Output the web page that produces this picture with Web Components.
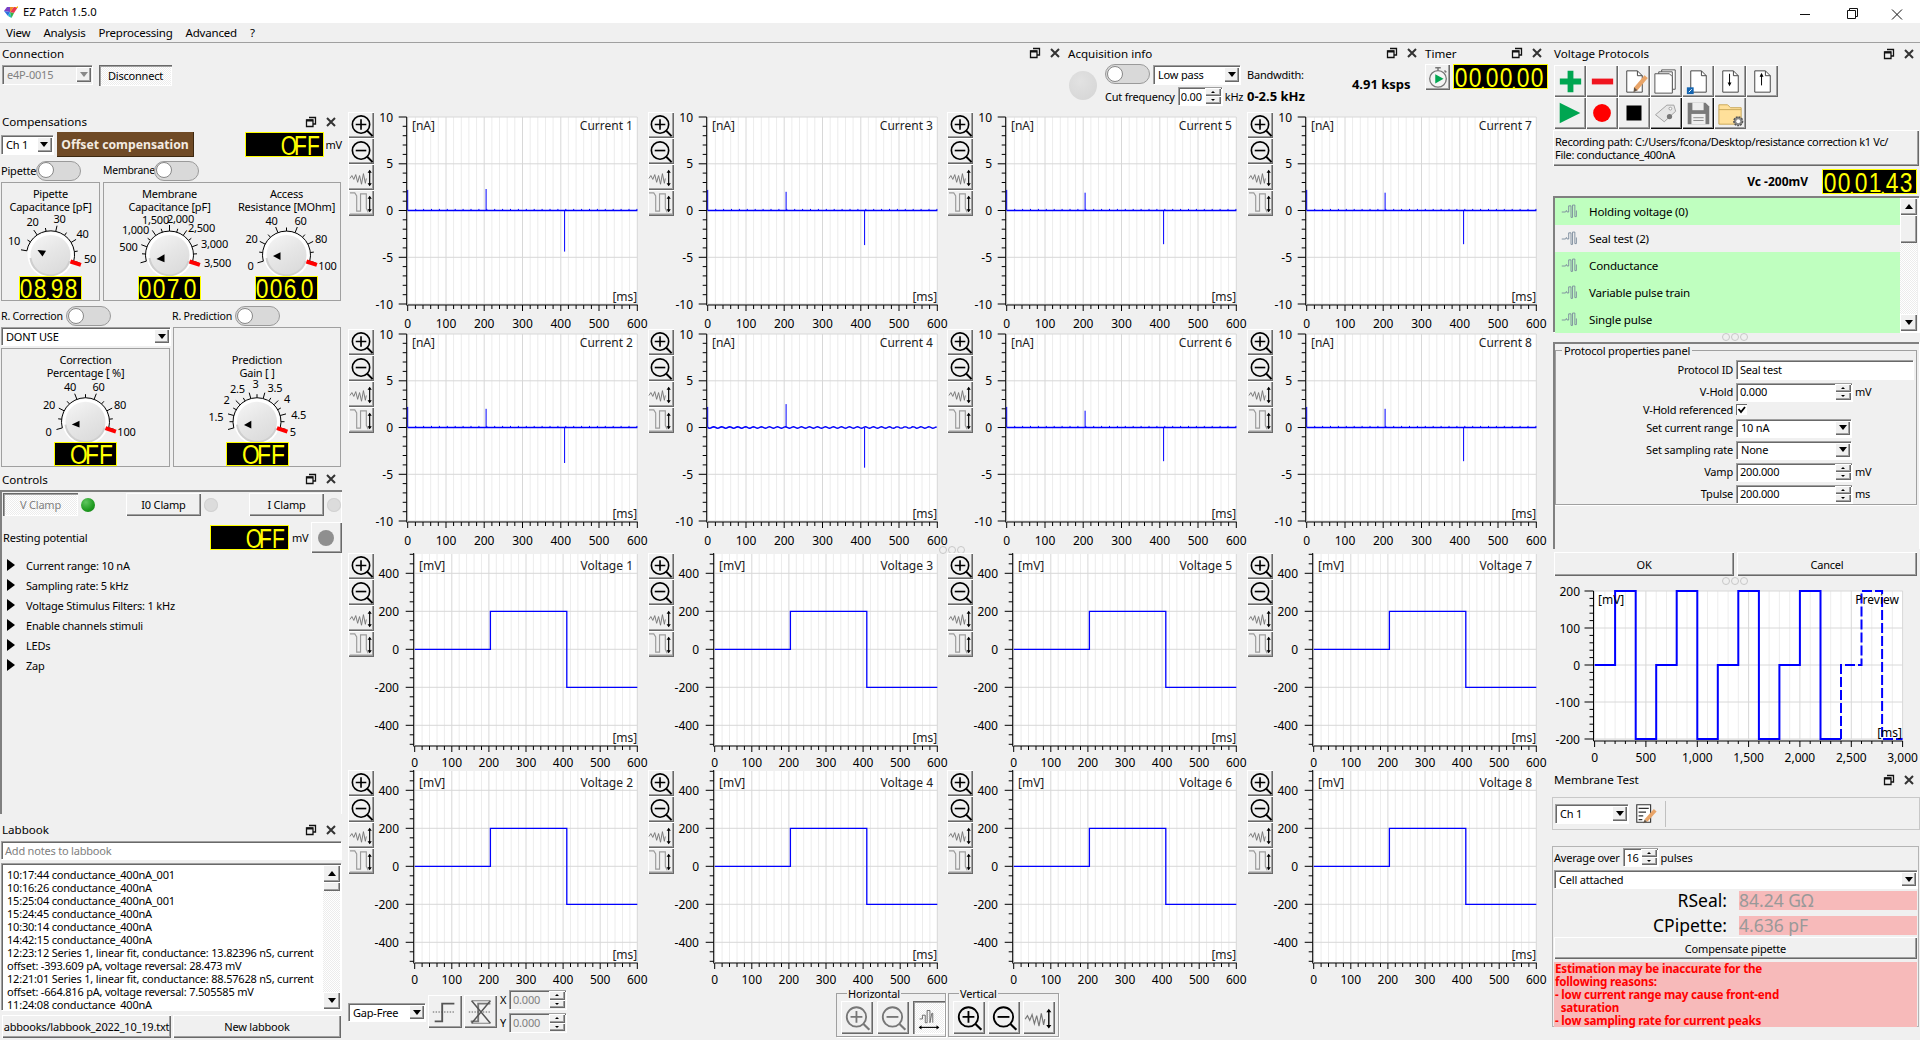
<!DOCTYPE html>
<html><head><meta charset="utf-8"><title>EZ Patch</title>
<style>
html,body{margin:0;padding:0;width:1920px;height:1040px;overflow:hidden;background:#f0f0f0;color:#000;font:11px/13px "Noto Sans","Liberation Sans",sans-serif;letter-spacing:-.2px}
ez-app{display:block}
</style></head><body><ez-app></ez-app>
<script>
const RAISED='background:#f0f0f0;box-shadow:inset 1px 1px 0 #fff,inset -1px -1px 0 #696969,inset -2px -2px 0 #a0a0a0;';
const SUNKEN='background:#fff;box-shadow:inset 1px 1px 0 #a0a0a0,inset 2px 2px 0 #696969,1px 1px 0 #fff;';
const DITHER='background:repeating-conic-gradient(#fff 0 25%,#ececec 0 50%) 0 0/2px 2px;';
function def(name,css,render){
  customElements.define(name,class extends HTMLElement{
    connectedCallback(){
      if(this.shadowRoot)return;
      const s=this.attachShadow({mode:'open'});
      s.innerHTML='<style>'+css+'</style>'+render(this);
    }
  });
}
const A=(e,n,d='')=>e.hasAttribute(n)?e.getAttribute(n):d;

/* ---- icons ---- */
const page=(ex='')=>`<path d="M8 5h11l5 5v17H8z" fill="#fff" stroke="#444"/><path d="M19 5v5h5" fill="none" stroke="#444"/>${ex}`;
const mag=(k,c='#000')=>`<circle cx="12.5" cy="12" r="9" fill="none" stroke="${c}" stroke-width="1.7"/><path d="M7 12h11${k=='+'?'M12.5 6.5v11':''}" stroke="${c}" stroke-width="1.7" fill="none"/><path d="M19 18.5 24.5 24" stroke="${c}" stroke-width="2"/>`;
const varrow=(x,y0,y1)=>`<path d="M${x} ${y0+1}V${y1-1}" stroke="#000" stroke-width="1.2"/><path d="M${x-2.2} ${y0+3}L${x} ${y0}L${x+2.2} ${y0+3}zM${x-2.2} ${y1-3}L${x} ${y1}L${x+2.2} ${y1-3}z" fill="#000"/>`;
const harrow=(y,x0,x1)=>`<path d="M${x0+1} ${y}H${x1-1}" stroke="#000" stroke-width="1.2"/><path d="M${x0+3} ${y-2.2}L${x0} ${y}L${x0+3} ${y+2.2}zM${x1-3} ${y-2.2}L${x1} ${y}L${x1-3} ${y+2.2}z" fill="#000"/>`;
const ICONS={
 zoomin:[26,mag('+')],zoomout:[26,mag('-')],
 zoomin_g:[26,mag('+','#777')],zoomout_g:[26,mag('-','#777')],
 wave:[26,`<path d="M1 14l2-3 2 4 2-5 2 8 2-7 2 9 2-11 2 10 1-5" fill="none" stroke="#777" stroke-width="1"/>`+varrow(21.5,5,22)],
 pulse:[26,`<path d="M1 2h5l2 3v16h4V3h6v15l2 4M1 24h24" fill="none" stroke="#9a9a9a" stroke-width="1.2"/>`+varrow(21.5,5,22)],
 fit_h:[32,`<path d="M6 17h3v-4h3v8h2V8h3v13l2-10h1v10" fill="none" stroke="#666" stroke-width="1"/>`+harrow(26,5,27)],
 stepa:[32,`<path d="M5 26h8V7h13" fill="none" stroke="#555" stroke-width="2"/><path d="M3 16h24" stroke="#555" stroke-dasharray="1.5 1.5"/>`],
 stepb:[32,`<path d="M5 26h8V7h13" fill="none" stroke="#777" stroke-width="2"/><path d="M3 16h24" stroke="#555" stroke-dasharray="1.5 1.5"/><path d="M6 4l20 24M26 4 6 28" stroke="#555" stroke-width="1.6"/><path d="M6 4h20M6 28h20" stroke="#777"/>`],
 plus:[32,`<path d="M13 5h6v8h8v6h-8v8h-6v-8H5v-6h8z" fill="#00a651"/>`],
 minus:[32,`<rect x="5" y="13" width="22" height="6" fill="#f0141e"/>`],
 edit:[32,page()+`<path d="M28 11 17 24" stroke="#e8a468" stroke-width="4.5"/><path d="M15 27l.5-5 3.6 3z" fill="#654"/>`],
 copy:[32,`<path d="M11 4h14v20H11z" fill="#fff" stroke="#555"/><path d="M8 6h14v20H8z" fill="#fff" stroke="#555"/><path d="M4 8h15l3 3v17H4z" fill="#fff" stroke="#555"/>`],
 import:[32,page()+`<rect x="4" y="22" width="7" height="7" fill="#1565b0"/><path d="M6 27l3-3" stroke="#fff"/>`],
 down:[32,page(`<path d="M15 8v11" stroke="#000"/><path d="M13 17h4l-2 4z" fill="#000"/>`)],
 up:[32,page(`<path d="M15 9v11" stroke="#000"/><path d="M13 11h4l-2-4z" fill="#000"/>`)],
 play:[32,`<path d="M5 5l22 11L5 27z" fill="#00a651"/>`],
 rec:[32,`<circle cx="16" cy="16" r="9.5" fill="#ff0000"/>`],
 stop:[32,`<rect x="8" y="8" width="16" height="16" fill="#000"/>`],
 tag:[32,`<path d="M4 18 17 7h8l2 7-13 12z" fill="#e6e6e6" stroke="#999"/><circle cx="21" cy="11" r="1.6" fill="#fff" stroke="#999"/><circle cx="20" cy="20" r="3" fill="#777"/>`],
 save:[32,`<path d="M5 5h19l4 4v19H5z" fill="#7a7a7a"/><rect x="10" y="5" width="12" height="8" fill="#eee"/><rect x="9" y="17" width="15" height="11" fill="#eee"/><path d="M11 21h11M11 24h11" stroke="#888"/>`],
 folder:[32,`<path d="M4 7h9l3 3h11v17H4z" fill="#ffe09a" stroke="#c9a85a"/><path d="M4 12h23" stroke="#c9a85a"/><circle cx="24" cy="24" r="4.5" fill="#888" stroke="#555" stroke-width="1.5" stroke-dasharray="2 1"/><circle cx="24" cy="24" r="2" fill="#fff"/>`],
 timer:[26,`<circle cx="13" cy="15" r="9" fill="#f4f4f4" stroke="#777" stroke-width="1.4"/><path d="M10 3h6M13 3v3M20 6l2 2" stroke="#777" stroke-width="1.6"/><path d="M10 10l9 5-9 5z" fill="#00a651"/>`],
 notes:[26,`<path d="M3 3h15v19H3z" fill="#fff" stroke="#333" stroke-width="1.2"/><path d="M5 7h11M5 11h8M5 15h5M5 19h4" stroke="#333" stroke-width="1.3"/><path d="M23 9 13 20" stroke="#e8a468" stroke-width="4"/><path d="M10 23l1.5-4 2.5 2.2z" fill="#654"/>`],
 list:[26,`<path d="M1 13h5l1-2 1 2h2V5h3v15h2V4h3v15h2v-8" fill="none" stroke="#7c8c9c" stroke-width="1.2"/>`]
};
const icon=(n,s)=>{const[v,b]=ICONS[n];return `<svg width="${s}" height="${s}" viewBox="0 0 ${v} ${v}" style="display:block">${b}</svg>`};
def('ez-icon',':host{display:inline-block;line-height:0}',e=>icon(A(e,'name'),+A(e,'size',16)));

/* ---- basic widgets ---- */
def('ez-btn',`:host{display:inline-flex;align-items:center;justify-content:center;box-sizing:border-box;white-space:nowrap;overflow:hidden;${RAISED}}
:host([pressed]){${DITHER}box-shadow:inset 1px 1px 0 #696969,inset 2px 2px 0 #a0a0a0,inset -1px -1px 0 #fff;}
:host([dim]){color:#808080}`,e=>'<slot></slot>');
def('ez-tool',`:host{display:inline-flex;align-items:center;justify-content:center;box-sizing:border-box;${RAISED}}
:host([dark]){box-shadow:inset 1px 1px 0 #fff,inset -1px -1px 0 #111,inset -2px -2px 0 #888}
:host([pressed]){${DITHER}box-shadow:inset 1px 1px 0 #696969,inset 2px 2px 0 #a0a0a0,inset -1px -1px 0 #fff}`,
 e=>icon(A(e,'name'),+A(e,'size',26)));
def('ez-combo',`:host{display:flex;align-items:center;box-sizing:border-box;padding-left:5px;${SUNKEN}white-space:nowrap}
:host([disabled]){background:#f0f0f0;color:#808080}
.t{flex:1;overflow:hidden}
.a{width:15px;height:calc(100% - 4px);margin-right:1px;display:flex;align-items:center;justify-content:center;box-sizing:border-box;${RAISED}}
.a i{border:4px solid transparent;border-top:5px solid #000;border-bottom:0}
:host([disabled]) .a i{border-top-color:#888}`,e=>`<span class="t"><slot></slot></span><span class="a"><i></i></span>`);
def('ez-spin',`:host{display:flex;align-items:center;box-sizing:border-box;padding-left:4px;${SUNKEN}white-space:nowrap}
:host([disabled]){background:#f0f0f0;color:#808080}
.t{flex:1;overflow:hidden}
.c{display:flex;flex-direction:column;width:17px;height:100%;padding:1px 1px 1px 0;box-sizing:border-box}
.c span{flex:1;display:flex;align-items:center;justify-content:center;${RAISED}}
.u{border:2px solid transparent;border-bottom:2px solid #000;border-top:0}
.d{border:2px solid transparent;border-top:2px solid #000;border-bottom:0}`,
 e=>`<span class="t"><slot></slot></span><span class="c"><span><i class="u"></i></span><span><i class="d"></i></span></span>`);
def('ez-toggle',`:host{display:inline-block;width:45px;height:20px;box-sizing:border-box;border:1.5px solid #9a9a9a;border-radius:10px;background:#d9d9d9;flex:none}
i{display:block;width:14px;height:14px;margin:.5px 0 0 1px;border-radius:50%;background:#fff;border:1px solid #888}`,e=>'<i></i>');
def('ez-led',`:host{display:inline-block;width:14px;height:14px;border-radius:50%;background:#dcdcdc;flex:none;box-shadow:inset 0 0 0 1px #d2d2d2}
:host([on]){background:radial-gradient(circle at 35% 30%,#5fc65f,#1f9a20 60%,#127a14);box-shadow:none}`,e=>'');
def('ez-lcd',`:host{display:flex;align-items:center;justify-content:flex-end;box-sizing:border-box;background:#000;border:1px solid #ffff00;color:#ffff00;flex:none;padding-right:3px;white-space:nowrap;letter-spacing:0}
b,i{display:inline-block;font:400 20px/14px "Liberation Sans",sans-serif;height:14px;text-align:center;flex:none}
i{width:3px;font-style:normal;text-indent:-2px;transform:translateY(5px)}`,e=>{
 const w=+A(e,'w',13),sy=+A(e,'sy',1.36),sx=(w/11.1*.9).toFixed(2);
 return [...A(e,'text')].map(c=>c=='.'?`<i>.</i>`:`<b style="width:${w}px;transform:scale(${sx},${sy})">${c}</b>`).join('');
});
def('dock-title',`:host{display:flex;align-items:center;justify-content:space-between;box-sizing:border-box;font-size:11.6px;letter-spacing:0;padding-bottom:1px}
.ic{display:flex;gap:8px;align-items:center;margin-left:auto}
svg{display:block}`,e=>`<span>${A(e,'text')}</span>`+(e.hasAttribute('noicons')?'':`<span class="ic">
<svg width="12" height="12" viewBox="0 0 12 12"><path d="M4 1.5h6.5V8H8M1.5 4H8v6.5H1.5z" fill="none" stroke="#111" stroke-width="1.3"/><path d="M1.5 4.5H8" stroke="#111" stroke-width="2"/></svg>
<svg width="12" height="12" viewBox="0 0 12 12"><path d="M2 2l8 8M10 2l-8 8" stroke="#333" stroke-width="2"/></svg></span>`));
def('ez-dots',`:host{display:flex;justify-content:center;align-items:center;gap:1px}i{width:6px;height:6px;border:1px solid #c8c8c8;border-radius:50%}`,e=>'<i></i><i></i><i></i>');
def('ez-scroll',`:host{display:flex;flex-direction:column;width:17px;box-sizing:border-box;${DITHER}flex:none}
.b{height:17px;display:flex;align-items:center;justify-content:center;flex:none;${RAISED}}
.u{border:4px solid transparent;border-bottom:5px solid #000;border-top:0}
.d{border:4px solid transparent;border-top:5px solid #000;border-bottom:0}
.th{flex:none;${RAISED}}.s{flex:1}`,e=>`<div class="b"><i class="u"></i></div><div class="th" style="height:${A(e,'thumb',17)}px"></div><div class="s"></div><div class="b"><i class="d"></i></div>`);

/* ---- knob ---- */
def('ez-dial',`:host{display:block;line-height:0}svg{display:block;overflow:visible}text{font-size:11px}`,e=>{
 const w=+A(e,'w'),h=62,cx=w/2,cy=+A(e,'cy',41);
 const labels=A(e,'labels').split(';').map(s=>{const p=s.split('|');return{t:p[0],x:+p[1],y:+p[2]}});
 const st=+A(e,'start',195),en=+A(e,'end',-15),n=+A(e,'n',10),mj=+A(e,'mj',2);
 const rad=a=>a*Math.PI/180;const P=(r,a)=>[(cx+r*Math.cos(rad(a))).toFixed(1),(cy-r*Math.sin(rad(a))).toFixed(1)];
 let tk='';
 for(let i=0;i<=n;i++){const a=st+(en-st)*i/n,[x0,y0]=P(24,a),[x1,y1]=P(i%mj==0?30:27.5,a);tk+=`M${x0} ${y0}L${x1} ${y1}`;}
 const[ax,ay]=P(24,st),[bx,by]=P(24,en);
 const[r0x,r0y]=P(21,-18),[r1x,r1y]=P(32,-18);
 const id='g'+Math.random().toString(36).slice(2,8);
 return `<svg width="${w}" height="${h}" viewBox="0 0 ${w} ${h}">
 <defs><linearGradient id="${id}" x1="0" y1="0" x2=".6" y2="1"><stop offset="0" stop-color="#f6f6f6"/><stop offset=".55" stop-color="#e6e6e6"/><stop offset="1" stop-color="#dcdcdc"/></linearGradient></defs>
 <path d="M${ax} ${ay}A24 24 0 1 1 ${bx} ${by}" fill="none" stroke="#000" stroke-width="1"/>
 <path d="${tk}" stroke="#000" stroke-width="1" fill="none"/>
 <circle cx="${cx}" cy="${cy}" r="23" fill="#fff"/><circle cx="${cx}" cy="${cy}" r="20" fill="url(#${id})"/>
 <path d="M${cx-20} ${cy+3}A20 20 0 0 0 ${cx+19} ${cy+6}" fill="none" stroke="#cfcfcf" stroke-width="2"/>
 <path d="M${r0x} ${r0y}L${r1x} ${r1y}" stroke="#ff0000" stroke-width="4"/>
 <polygon points="${A(e,'ptr').split(' ').map(p=>{const[a,b]=p.split(',');return (cx+ +a)+','+(cy+ +b)}).join(' ')}" fill="#000"/>
 ${labels.map(l=>`<text x="${cx+l.x}" y="${cy+l.y+4}" text-anchor="middle">${l.t}</text>`).join('')}
 </svg>`;
});
def('ez-knob',`:host{display:flex;flex-direction:column;align-items:center;text-align:center}
.t{height:27px;white-space:nowrap}`,e=>`<div class="t">${A(e,'title1')}<br>${A(e,'title2')}</div>
<ez-dial w="${A(e,'w')}" cy="${A(e,'cy',41)}" labels="${A(e,'labels')}" start="${A(e,'start',195)}" end="${A(e,'end',-15)}" n="${A(e,'n',10)}" mj="${A(e,'mj',2)}" ptr="${A(e,'ptr')}"></ez-dial>
<ez-lcd text="${A(e,'value')}" w="14" style="width:63px;height:24px"></ez-lcd>`);

/* ---- plots ---- */
const fmt=n=>Math.abs(n)>=1000?String(n).replace(/(\d)(\d{3})$/,'$1,$2'):String(n);
function tracePlot(e){
 const isC=A(e,'type')=='current';
 const L=isC?33.7:40.7,R=263.3,T=isC?5:1,B=192;
 const X=t=>+(L+t*(R-L)/600).toFixed(1);
 const Y=isC?(v=>+(T+(10-v)*(B-T)/20).toFixed(1)):(v=>+(96.3-v*.19).toFixed(1));
 const ax=L-1,bot=B+1;
 let g='',gm='',tick='',lab='';
 for(let t=0;t<=600;t+=20){(t%100==0?(gm+=`M${X(t)} ${T}V${B}`):(g+=`M${X(t)} ${T}V${B}`));
   tick+=`M${X(t)} ${bot}v${t%100==0?6:4}`;}
 for(let t=0;t<=600;t+=100)lab+=`<text x="${X(t)}" y="${isC?216:214}" text-anchor="middle">${t}</text>`;
 const yvals=isC?[10,5,0,-5,-10]:[400,200,0,-200,-400];
 yvals.forEach(v=>{gm+=`M${L} ${Y(v)}H${R}`;tick+=`M${ax} ${Y(v)}h-8`;lab+=`<text x="${isC?19:25}" y="${Y(v)+4.5}" text-anchor="end">${v}</text>`});
 if(isC){for(let v=-10;v<=10;v++)if(v%5)tick+=`M${ax} ${Y(v)}h-4`;}
 else{for(let v=-500;v<=500;v+=50)if(v%200)tick+=`M${ax} ${Y(v)}h-4`;}
 let tr='';
 if(isC){
  const up=+A(e,'up'),dn=+A(e,'dn'),wavy=e.hasAttribute('wavy');
  let d=`M${L} ${Y(2.2)}V${Y(0)}`;let b='';
  const y0=Y(0);
  if(wavy){let p=`M${L} ${y0}`;for(let x=L;x<=R;x+=1){p+=`L${x.toFixed(1)} ${(y0+Math.sin((x-L)/1.27)*.7).toFixed(1)}`}b=p;}
  else{b=`M${L} ${y0}H${R}`;for(let x=L+8;x<R;x+=7.9){d+=`M${x.toFixed(1)} ${y0}v-1.6`}}
  tr=`<path d="${b}" stroke="#0000ff" stroke-width="1.4" fill="none"/><path d="${d}M${X(205)} ${y0}V${Y(up)}M${X(410)} ${y0}V${Y(dn)}" stroke="#0000ff" fill="none" stroke-width="1"/>`;
 }else{
  tr=`<path d="M${L} ${Y(0)}H${X(204)}V${Y(200)}H${X(410)}V${Y(-200)}H${R}" fill="none" stroke="#0000ff" stroke-width="1.3"/>`;
 }
 const ttop=isC?14:13;
 return `<svg width="274" height="217" viewBox="0 0 274 217"><rect x="${L}" y="${T}" width="${R-L}" height="${B-T}" fill="#fff"/>
 <path d="${g}" stroke="#ececec" fill="none"/><path d="${gm}" stroke="#d8d8d8" fill="none"/>${tr}
 <path d="M${ax} ${isC?T:0}V${bot+.5}M${L} ${bot}H${R+.5}" stroke="#000" fill="none"/><path d="${tick}" stroke="#000" fill="none"/>
 ${lab}
 <text x="${isC?38:45}" y="${ttop+4}" fill="#222">[${isC?'nA':'mV'}]</text>
 <text x="259" y="${ttop+4}" text-anchor="end" fill="#222">${A(e,'label')}</text>
 <text x="${R}" y="189" text-anchor="end" fill="#222">[ms]</text></svg>`;
}
def('ez-plot',`:host{display:flex;align-items:flex-start;width:299.7px;height:217px;overflow:visible;letter-spacing:0}
.tb{display:flex;flex-direction:column;width:26px;flex:none}
ez-tool{width:26px;height:26px}
svg{display:block;overflow:visible;flex:none}text{font-size:12px}`,e=>`<div class="tb"><ez-tool name="zoomin" size="25"></ez-tool><ez-tool name="zoomout" size="25"></ez-tool><ez-tool name="wave" size="25"></ez-tool><ez-tool name="pulse" size="25"></ez-tool></div>${tracePlot(e)}`);
def('ez-plot-grid',`:host{display:grid;grid-template-columns:repeat(4,299.7px);grid-auto-rows:217px}`,e=>{
 const vals=A(e,'items').split(';');
 return vals.map(v=>{const[l,up,dn,w]=v.split('|');
   return `<ez-plot type="${A(e,'type')}" label="${l}" up="${up||0}" dn="${dn||0}" ${w?'wavy':''}></ez-plot>`}).join('');
});
def('ez-preview',`:host{display:block;height:183px;line-height:0;letter-spacing:0}svg{display:block;overflow:visible}text{font-size:12px}`,e=>{
 const L=43.5,T=5,B=153,R=352.7,X=t=>+(44.6+t*(308/3000)).toFixed(1),Y=v=>+(79-v*.37).toFixed(1);
 let g='',gm='',tk='',lab='';
 for(let t=0;t<=3000;t+=100){(t%500?g+=`M${X(t)} ${T}V${B}`:gm+=`M${X(t)} ${T}V${B}`);tk+=`M${X(t)} 155v${t%500?3:6}`}
 for(let t=0;t<=3000;t+=500)lab+=`<text x="${X(t)}" y="176" text-anchor="middle">${fmt(t)}</text>`;
 for(let v=-200;v<=200;v+=100){gm+=`M${L} ${Y(v)}H${R}`;tk+=`M${L} ${Y(v)}h-9`;lab+=`<text x="30" y="${Y(v)+4.5}" text-anchor="end">${v}</text>`}
 for(let v=-200;v<=200;v+=20)if(v%100)tk+=`M${L} ${Y(v)}h-4`;
 let d=`M${X(0)} ${Y(0)}`;for(let t=0;t<2400;t+=600){d+=`H${X(t+200)}V${Y(200)}H${X(t+400)}V${Y(-200)}H${X(t+600)}`;if(t<1800)d+=`V${Y(0)}`}
 let d2=`M${X(2400)} ${Y(-200)}V${Y(0)}H${X(2600)}V${Y(200)}H${X(2800)}V${Y(-200)}H${X(3000)}`;
 return `<svg width="370" height="183" viewBox="0 0 370 183"><rect x="${L}" y="${T}" width="${R-L}" height="${B-T}" fill="#fff"/>
 <path d="${g}" stroke="#ededed" fill="none"/><path d="${gm}" stroke="#d8d8d8" fill="none"/>
 <path d="${d}" fill="none" stroke="#0000ff" stroke-width="2"/><path d="${d2}" fill="none" stroke="#0000ff" stroke-width="2" stroke-dasharray="10 3"/>
 <path d="M${L} ${T}V155M${L} 155H${R}" stroke="#000" fill="none"/><path d="${tk}" stroke="#000" fill="none"/>${lab}
 <text x="48" y="18">[mV]</text><text x="349" y="18" text-anchor="end">Preview</text><text x="352" y="151" text-anchor="end">[ms]</text></svg>`;
});

/* ---- title & menu ---- */
def('ez-titlebar',`:host{display:flex;align-items:center;height:23px;background:#fff;padding-left:2px;font-size:11.3px;letter-spacing:0;box-sizing:border-box}
.n{margin-left:5px}.w{margin-left:auto;display:flex;align-items:center}svg{display:block}`,e=>`
<svg width="16" height="16" viewBox="0 0 16 16"><path d="M8 3 12 3 8 8z" fill="#f08a24"/><path d="M2 7 5 3 8 3 8 8z" fill="#7a3fc4"/><path d="M2 7 8 8 6 12z" fill="#2f6fe0"/><path d="M6 12 8 8 9.5 14z" fill="#22b5c9"/><path d="M9.5 14 8 8 12 9z" fill="#35b34a"/><path d="M12 9 8 8 12 3 16 3z" fill="#e8384f"/><path d="M13 4l3-2v2z" fill="#f5c21c"/></svg>
<span class="n">EZ Patch 1.5.0</span><span class="w">
<svg width="121" height="16" viewBox="0 0 121 16"><path d="M18 10.5h10" stroke="#111"/><path d="M65.5 6.5h8v8h-8zM67.5 6.5v-2h8v8h-2" fill="none" stroke="#111"/><path d="M110 5.5l10 10M120 5.5l-10 10" stroke="#111"/></svg><span style="width:17px"></span></span>`);
def('ez-menubar',`:host{display:flex;align-items:center;height:19px;gap:13px;padding-left:6px;box-sizing:border-box;font-size:11.5px;background:#f0f0f0}`,
 e=>['View','Analysis','Preprocessing','Advanced','?'].map(t=>`<span>${t}</span>`).join(''));

/* ---- left column ---- */
def('ez-connection',`:host{display:block;height:69px}dock-title{height:22px;padding:0 0 1px 2px}
.r{display:flex;align-items:flex-start;padding-left:2px}`,e=>`<dock-title text="Connection" noicons></dock-title>
<div class="r"><ez-combo disabled style="width:90px;height:19px">e4P-0015</ez-combo><ez-btn pressed style="width:73px;height:21px;margin-left:7px">Disconnect</ez-btn></div>`);
const KN={
 pip:'10|-36.5|-14;20|-18|-33;30|9|-36;40|32|-21;50|39.5|4',
 mem:'500|-41|-8;1,000|-34|-25;1,500|-14|-35;2,000|11|-36;2,500|32|-27;3,000|45|-11;3,500|48|8',
 acc:'0|-36|11;20|-35|-16;40|-15|-34;60|14|-34;80|34.5|-16;100|41|11',
 cor:'0|-37|10;20|-36.5|-17;40|-15.5|-35;60|13|-35;80|34.5|-17;100|41|10',
 pre:'1.5|-41|-5;2|-30.5|-22;2.5|-19.5|-33;3|-1.5|-38;3.5|18|-34;4|30|-23;4.5|41.7|-7;5|35.7|10'};
def('ez-compensations',`:host{display:block;height:358px}
dock-title{height:20px;padding:0 5px 1px 2px}
.r1{display:flex;align-items:center;height:25px;padding-left:1px}
.off{width:138px;height:25px;margin-left:4px;background:#6f4a26;color:#f4ece2;font-weight:700;font-size:12.2px;letter-spacing:0;white-space:nowrap;display:flex;align-items:center;justify-content:center;box-shadow:inset -1px -1px 0 #3d2810}
.r2{display:flex;align-items:center;height:21px;margin-top:3px;padding-left:0}
.r2 span,.r3 span{flex:none;white-space:nowrap}
.boxes{display:flex;height:119px;margin-top:1px;padding-left:1px}
.box{box-sizing:border-box;border:1px solid #a0a0a0;padding-top:4px;height:119px}
.r3{display:flex;align-items:center;height:22px;margin-top:4px;padding-left:1px}
.lo{display:flex;padding-left:1px}
.c1{width:169px}.c1 ez-combo{width:169px;height:18px}
.c1 .box{height:119px;margin-top:3px}
.c2{width:168px;margin-left:3px;box-sizing:border-box;border:1px solid #a0a0a0;padding-top:25px;height:140px}
`,e=>`<dock-title text="Compensations"></dock-title>
<div class="r1"><ez-combo style="width:52px;height:19px">Ch 1</ez-combo><div class="off">Offset compensation</div>
<ez-lcd text="OFF" w="13" style="width:79px;height:25px;margin-left:51px"></ez-lcd><span style="margin-left:2px">mV</span></div>
<div class="r2"><span style="width:36px;padding-left:1px;box-sizing:border-box">Pipette</span><ez-toggle></ez-toggle><span style="width:51px;margin-left:22px;font-size:10.4px">Membrane</span><ez-toggle></ez-toggle></div>
<div class="boxes"><div class="box" style="width:99px"><ez-knob w="97" title1="Pipette" title2="Capacitance [pF]" labels="${KN.pip}" start="170" end="-15" n="8" mj="2" ptr="-13,-5 -4.5,-4.3 -8,1.5" value="08.98"></ez-knob></div>
<div class="box" style="width:238px;margin-left:3px;display:flex;padding-left:7px"><ez-knob style="width:117px" w="117" title1="Membrane" title2="Capacitance [pF]" labels="${KN.mem}" n="12" ptr="-13,4 -5,-.7 -5,7.3" value="007.0"></ez-knob><ez-knob style="width:117px" w="117" title1="Access" title2="Resistance [MOhm]" labels="${KN.acc}" n="10" ptr="-13.5,1 -6,-2.7 -6,5" value="006.0"></ez-knob></div></div>
<div class="r3"><span style="width:65px;font-size:10.6px">R. Correction</span><ez-toggle></ez-toggle><span style="width:63px;margin-left:61px;font-size:10.6px">R. Prediction</span><ez-toggle></ez-toggle></div>
<div class="lo"><div class="c1"><ez-combo>DONT USE</ez-combo><div class="box"><ez-knob w="167" cy="41.7" title1="Correction" title2="Percentage [ %]" labels="${KN.cor}" n="10" ptr="-13.7,2.7 -6,-1 -6,5.7" value="OFF"></ez-knob></div></div>
<div class="c2"><ez-knob w="166" cy="41.7" title1="Prediction" title2="Gain [ ]" labels="${KN.pre}" n="14" ptr="-13,3.3 -5.7,-1 -5.7,6.7" value="OFF"></ez-knob></div></div>`);
def('ez-controls',`:host{display:block;height:350px}
dock-title{height:20px;padding:0 5px 2px 2px}
.f{height:324px;box-sizing:border-box;box-shadow:inset 2px 2px 0 #808080,inset -1px 0 0 #fff;padding:3px 0 0 3px}
.r{display:flex;align-items:center;height:23px}
ez-btn{width:75px;height:23px}
.r2{display:flex;align-items:center;height:31px;margin-top:6px}
.r2 span{flex:none;white-space:nowrap}
.t{display:flex;align-items:center;height:20px;padding-left:4px}
.t i{border:6px solid transparent;border-left:8px solid #000;border-right:0;margin-right:11px}
.tree{margin-top:2px}`,e=>`<dock-title text="Controls"></dock-title><div class="f">
<div class="r"><ez-btn pressed dim>V Clamp</ez-btn><ez-led on style="margin-left:3px"></ez-led>
<ez-btn style="margin-left:31px">I0 Clamp</ez-btn><ez-led style="margin-left:3px"></ez-led>
<ez-btn style="margin-left:31px">I Clamp</ez-btn><ez-led style="margin-left:3px"></ez-led></div>
<div class="r2"><span style="width:207px">Resting potential</span><ez-lcd text="OFF" w="13" style="width:79px;height:25px"></ez-lcd><span style="margin-left:3px">mV</span>
<ez-btn style="width:32px;height:31px;margin-left:2px"><svg width="16" height="16" style="display:block"><circle cx="8" cy="8" r="8" fill="#8f8f8f"/></svg></ez-btn></div>
<div class="tree">${['Current range: 10 nA','Sampling rate: 5 kHz','Voltage Stimulus Filters: 1 kHz','Enable channels stimuli','LEDs','Zap'].map(t=>`<div class="t"><i></i><span>${t}</span></div>`).join('')}</div></div>`);
def('ez-labbook',`:host{display:block;height:220px;padding-left:1px}
dock-title{height:20px;padding:0 5px 1px 1px}
.e{width:340px;height:18px;margin-top:1px;box-sizing:border-box;${SUNKEN}color:#808080;padding:3px 0 0 4px}
.log{display:flex;width:340px;height:147px;margin-top:4px;box-sizing:border-box;${SUNKEN}padding:2px 0 1px 2px}
.tx{flex:1;overflow:hidden;white-space:pre;padding:3px 0 0 4px;line-height:13px;margin-right:4px}
.b{display:flex;margin-top:5px;padding-left:1px}ez-btn{height:23px}`,e=>`<dock-title text="Labbook"></dock-title>
<div class="e">Add notes to labbook</div>
<div class="log"><div class="tx">10:17:44 conductance_400nA_001
10:16:26 conductance_400nA
15:25:04 conductance_400nA_001
15:24:45 conductance_400nA
10:30:14 conductance_400nA
14:42:15 conductance_400nA
12:23:12 Series 1, linear fit, conductance: 13.82396 nS, current
offset: -393.609 pA, voltage reversal: 28.473 mV
12:21:01 Series 1, linear fit, conductance: 88.57628 nS, current
offset: -664.816 pA, voltage reversal: 7.505585 mV
11:24:08 conductance_400nA</div><ez-scroll thumb="9" style="margin-right:1px"></ez-scroll></div>
<div class="b"><ez-btn style="width:169px">abbooks/labbook_2022_10_19.txt</ez-btn><ez-btn style="width:168px;margin-left:2px">New labbook</ez-btn></div>`);

/* ---- middle column ---- */
def('ez-acq',`:host{display:block}dock-title{height:21px;padding:0 7px 1px 0}
.b{display:flex;padding-left:1px}
.led{width:28px;height:29px;border-radius:50%;background:radial-gradient(circle at 40% 35%,#e2e2e2,#d4d4d4);margin-top:7px;flex:none}
.c{margin-left:8px;width:142px;flex:none}
.r{display:flex;align-items:center;height:20px}
.r+.r{margin-top:3px;height:18px}
.d{flex:none}
.d div{height:20px;display:flex;align-items:center}.d div+div{height:22px;font-weight:700;font-size:13px;letter-spacing:0}
.s{font-weight:700;font-size:13px;letter-spacing:0;margin:14px 0 0 47px;white-space:nowrap}`,e=>`<dock-title text="Acquisition info"></dock-title>
<div class="b"><div class="led"></div><div class="c"><div class="r"><ez-toggle></ez-toggle><ez-combo style="width:87px;height:19px;margin-left:3px">Low pass</ez-combo></div>
<div class="r"><span style="white-space:nowrap">Cut frequency</span><ez-spin style="width:44px;height:18px;margin-left:3px;padding-left:3px;flex:none">0.00</ez-spin><span style="margin-left:3px">kHz</span></div></div>
<div class="d"><div>Bandwdith:</div><div style="margin-top:1px">0-2.5 kHz</div></div><div class="s">4.91 ksps</div></div>`);
def('ez-timer',`:host{display:block}dock-title{height:21px;padding:0 7px 1px 0}
.r{display:flex;align-items:flex-start}`,e=>`<dock-title text="Timer"></dock-title>
<div class="r"><ez-tool name="timer" size="24" style="width:25px;height:26px"></ez-tool><ez-lcd text="00.00.00" w="14" style="width:95px;height:25px;margin-left:3px"></ez-lcd></div>`);
def('ez-middle',`:host{display:block;height:997px}
.h{display:grid;grid-template-columns:726px 357px 125px;height:69px}
.p{padding-left:6px}
.sp{height:7px}
.bar{display:flex;align-items:flex-start;padding-left:6px;height:53px}
fieldset{box-sizing:border-box;margin:0;padding:1px 0 0 4px;border:1px solid #a0a0a0;display:flex;gap:3px;height:50px;min-width:0;box-shadow:1px 1px 0 #fff}
legend{padding:0 1px;margin-left:6px;line-height:13px}
ez-tool[pb]{width:32px;height:33px}
.col{display:flex;flex-direction:column;gap:3px;margin-top:3px}
.xy{width:9px;margin-left:3px;display:flex;flex-direction:column;margin-top:3px}
.xy span{height:19px;line-height:19px}.xy span+span{margin-top:4px}`,e=>`<div class="h"><dock-title text="" style="height:21px;padding-right:7px"></dock-title><ez-acq></ez-acq><ez-timer></ez-timer></div>
<div class="p"><ez-plot-grid type="current" items="Current 1|2.3|-4.4;Current 3|2|-3.7;Current 5|1.9|-3.6;Current 7|1.9|-3.6;Current 2|2|-3.8;Current 4|2.5|-4.3|w;Current 6|1.8|-3.6;Current 8|2|-3.6"></ez-plot-grid></div>
<div class="sp"><ez-dots style="height:7px;margin-left:12px"></ez-dots></div>
<div class="p"><ez-plot-grid type="voltage" items="Voltage 1;Voltage 3;Voltage 5;Voltage 7;Voltage 2;Voltage 4;Voltage 6;Voltage 8"></ez-plot-grid></div>
<div class="bar"><ez-combo style="width:77px;height:18px;margin-top:16px;flex:none">Gap-Free</ez-combo>
<ez-tool name="stepa" size="30" style="width:34px;height:33px;margin:8px 0 0 3px"></ez-tool><ez-tool name="stepb" size="30" style="width:33px;height:33px;margin:8px 0 0 2px"></ez-tool>
<div class="xy"><span>X</span><span>Y</span></div><div class="col"><ez-spin disabled style="width:57px;height:19px">0.000</ez-spin><ez-spin disabled style="width:57px;height:19px;margin-top:1px">0.000</ez-spin></div>
<fieldset style="width:110px;margin-left:270px"><legend>Horizontal</legend><ez-tool pb name="zoomin_g" size="28"></ez-tool><ez-tool pb name="zoomout_g" size="28" style="margin-left:1px"></ez-tool><ez-tool pb pressed name="fit_h" size="30" style="margin-left:1px"></ez-tool></fieldset>
<fieldset style="width:111px;margin-left:2px"><legend>Vertical</legend><ez-tool pb name="zoomin" size="28"></ez-tool><ez-tool pb name="zoomout" size="28"></ez-tool><ez-tool pb name="wave" size="30"></ez-tool></fieldset></div>`);

/* ---- right column ---- */
def('ez-protocols',`:host{display:block}
dock-title{height:22px;padding:0 5px 1px 4px}
.tb{display:flex;padding-left:4px}ez-tool{width:32px;height:32px;flex:none}
ez-btn.rp{display:block;box-sizing:border-box;width:366px;height:36px;margin:1px 0 0 3px;padding:5px 0 0 2px;text-align:left;white-space:pre;letter-spacing:-.3px}
.v{display:flex;align-items:center;justify-content:flex-end;height:25px;margin-top:3px;padding-right:3px;font-weight:700;font-size:12px;letter-spacing:0}
.ls{display:flex;height:136px;width:366px;margin:2px 0 0 3px;box-sizing:border-box;box-shadow:inset 2px 2px 0 #808080,inset -1px -1px 0 #fff,1px 1px 0 #fff;padding:2px 2px 1px 2px}
.rows{flex:1}.row{height:27px;display:flex;align-items:center;background:#bfffbf;padding-left:6px;gap:8px;font-size:11.6px}
.row.o{background:#f0f0f0}`,e=>`<dock-title text="Voltage Protocols"></dock-title>
<div class="tb">${['plus','minus','edit','copy','import','down','up'].map(n=>`<ez-tool name="${n}" size="31"></ez-tool>`).join('')}</div>
<div class="tb"><ez-tool name="play" size="30"></ez-tool><ez-tool name="rec" size="30"></ez-tool><ez-tool name="stop" size="30"></ez-tool><ez-tool dark name="tag" size="28"></ez-tool><ez-tool dark name="save" size="30"></ez-tool><ez-tool name="folder" size="31"></ez-tool></div>
<ez-btn class="rp">Recording path: C:/Users/fcona/Desktop/resistance correction k1 Vc/
File: conductance_400nA</ez-btn>
<div class="v"><span>Vc -200mV</span><ez-lcd text="00.01.43" w="14" style="width:95px;height:25px;margin-left:14px"></ez-lcd></div>
<div class="ls"><div class="rows">${[['Holding voltage (0)'],['Seal test (2)','o'],['Conductance'],['Variable pulse train'],['Single pulse']].map(([t,c])=>`<div class="row ${c||''}"><ez-icon name="list" size="20"></ez-icon><span>${t}</span></div>`).join('')}</div><ez-scroll thumb="28"></ez-scroll></div>`);
def('ez-props',`:host{display:block;width:366px;height:207px;margin-left:3px;box-sizing:border-box;box-shadow:inset 2px 2px 0 #808080,1px 0 0 #fff;padding:2px 2px 0 2px}
fieldset{box-sizing:border-box;margin:0;padding:3px 0 0 0;border:1px solid #a0a0a0;height:161px;min-width:0;box-shadow:0 1px 0 #fff}
legend{padding:0 2px;margin-left:6px;line-height:13px}
.g{display:grid;grid-template-columns:177px 1fr;column-gap:3px;row-gap:3px;grid-template-rows:19px 19px 11px 19px 19px 19px 19px;align-items:center}
.l{text-align:right}.fr{display:flex;align-items:center;gap:3px}
.le{width:177px;height:19px;box-sizing:border-box;${SUNKEN}padding:3px 0 0 4px}
.cb{width:11px;height:11px;background:#fff;box-shadow:inset 1px 1px 0 #696969;display:block}
ez-spin{width:116px;height:18px}ez-combo{width:115px;height:18px}`,e=>`<fieldset><legend>Protocol properties panel</legend><div class="g">
<span class="l">Protocol ID</span><div class="le">Seal test</div>
<span class="l">V-Hold</span><div class="fr"><ez-spin>0.000</ez-spin><span>mV</span></div>
<span class="l">V-Hold referenced</span><svg class="cb" viewBox="0 0 11 11"><path d="M2.5 5l2.5 3 4-5" fill="none" stroke="#000" stroke-width="1.8"/></svg>
<span class="l">Set current range</span><ez-combo>10 nA</ez-combo>
<span class="l">Set sampling rate</span><ez-combo>None</ez-combo>
<span class="l">Vamp</span><div class="fr"><ez-spin>200.000</ez-spin><span>mV</span></div>
<span class="l">Tpulse</span><div class="fr"><ez-spin>200.000</ez-spin><span>ms</span></div>
</div></fieldset>`);
def('ez-membrane',`:host{display:block}dock-title{height:22px;padding:0 5px 1px 4px}
.t{display:flex;align-items:center;height:33px;width:368px;margin:6px 0 0 2px;box-sizing:border-box;border:1px solid #c8c8c8;padding-left:2px}
.sep{width:1px;height:26px;background:#c0c0c0;margin-left:7px}
.f{width:367px;height:181px;margin:16px 0 0 2px;box-sizing:border-box;border:1px solid #b4b4b4;padding:1px 1px 0 1px}
.a{display:flex;align-items:center;height:18px;gap:3px}
.vl{display:flex;align-items:center;height:19px;letter-spacing:0}
.vl .l{width:173px;text-align:right;font-size:17.5px;line-height:19px}
.vl .v{margin-left:12px;flex:1;background:#f7baba;color:#999;font-size:17.5px;line-height:19px;height:19px}
.w{background:#f7baba;color:#ff0000;font-weight:700;font-size:11.6px;line-height:13px;height:65px;margin-top:3px;padding:0 0 0 1px;white-space:pre}`,e=>`<dock-title text="Membrane Test"></dock-title>
<div class="t"><ez-combo style="width:73px;height:19px;flex:none">Ch 1</ez-combo><ez-icon name="notes" size="24" style="margin-left:6px"></ez-icon><span class="sep"></span></div>
<div class="f"><div class="a"><span>Average over</span><ez-spin style="width:35px;height:18px;padding-left:4px">16</ez-spin><span>pulses</span></div>
<ez-combo style="width:363px;height:18px;margin-top:4px">Cell attached</ez-combo>
<div class="vl" style="margin-top:3px"><span class="l">RSeal:</span><span class="v">84.24 GΩ</span></div>
<div class="vl" style="margin-top:6px"><span class="l">CPipette:</span><span class="v">4.636 pF</span></div>
<ez-btn style="width:363px;height:22px;display:flex;margin-top:2px">Compensate pipette</ez-btn>
<div class="w">Estimation may be inaccurate for the
following reasons:
- low current range may cause front-end
  saturation
- low sampling rate for current peaks</div></div>`);
def('ez-right',`:host{display:block}
.ok{display:flex;margin:3px 0 0 4px}ez-btn{height:24px}`,e=>`<ez-protocols></ez-protocols><ez-dots style="height:10px"></ez-dots><ez-props></ez-props>
<div class="ok"><ez-btn style="width:180px">OK</ez-btn><ez-btn style="width:180px;margin-left:3px">Cancel</ez-btn></div>
<ez-dots style="height:10px"></ez-dots><ez-preview></ez-preview><ez-membrane></ez-membrane>`);

/* ---- app ---- */
def('ez-app',`:host{display:block;width:1920px;height:1040px;overflow:hidden}
.line{height:1px;background:#a0a0a0}
.main{display:grid;grid-template-columns:342px 1208px 370px;height:997px}
.left{display:block}`,e=>`<ez-titlebar></ez-titlebar><ez-menubar></ez-menubar><div class="line"></div>
<div class="main"><div class="left"><ez-connection></ez-connection><ez-compensations></ez-compensations><ez-controls></ez-controls><ez-labbook></ez-labbook></div>
<ez-middle></ez-middle><ez-right></ez-right></div>`);
</script>
</body></html>
